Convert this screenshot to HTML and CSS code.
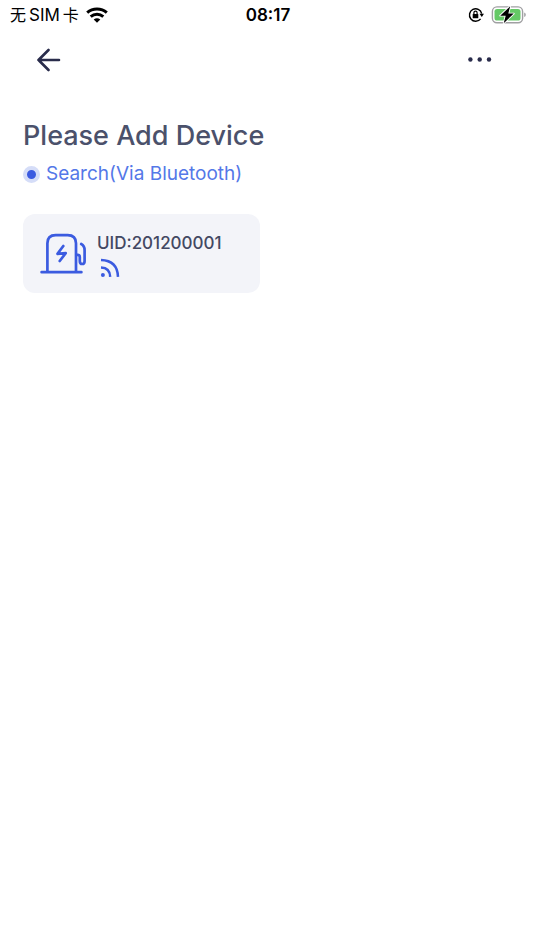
FILE: index.html
```html
<!DOCTYPE html>
<html lang="en">
<head>
<meta charset="utf-8">
<meta name="viewport" content="width=device-width, initial-scale=1">
<title>Add Device</title>
<link rel="stylesheet" href="styles.css">
</head>
<body>
<div class="status-bar">
  <div class="status-side">
    <span class="carrier">无<span class="carrier-latin">SIM</span>卡</span>
    <svg class="wifi" width="22" height="16" viewBox="0 0 22 16" aria-hidden="true">
      <g fill="none" stroke="#000" stroke-width="3">
        <path d="M1.2 5.600C6.700.8 15.300.8 20.800 5.600"/>
        <path d="M4.700 9.600C8.400 6.400 13.600 6.400 17.300 9.600"/>
      </g>
      <path d="M7.700 12.400Q11 9.900 14.300 12.400L11 15.700Z"/>
    </svg>
  </div>
  <time class="clock">08:17</time>
  <div class="status-side status-right">
    <svg width="16" height="16" viewBox="0 0 16 16" aria-hidden="true">
      <path d="M12.600 11.800A6.200 6.200 0 1 1 13.700 6.600" fill="none" stroke="#000" stroke-width="1.400"/>
      <path d="M11.500 6.700H16L13.800 10Z"/>
      <rect x="4.700" y="7" width="5.600" height="4.300" rx=".6"/>
      <path d="M5.900 7.200V5.700a1.600 1.600 0 0 1 3.200 0v1.500" fill="none" stroke="#000" stroke-width="1.200"/>
    </svg>
    <svg width="35" height="20" viewBox="0 0 35 20" aria-hidden="true">
      <rect x="1.400" y="1.900" width="30.200" height="15.800" rx="4.500" fill="#fff" stroke="#a0a0a2" stroke-width="1.400"/>
      <rect x="3.500" y="4" width="26" height="11.600" rx="2.600" fill="#65c966"/>
      <path d="M33.200 7.500v4.500q1.600-.5 1.600-2.250T33.200 7.500Z" fill="#a0a0a2"/>
      <path d="M19.200 1.200 9.200 10.700h5.500L12.700 18.200 22.800 8.600H17.300Z" fill="#000" stroke="#fff" stroke-width="1.800" paint-order="stroke" stroke-linejoin="round"/>
    </svg>
  </div>
</div>
<header class="nav-bar">
  <button class="nav-button" type="button" aria-label="Back">
    <svg width="24" height="24" viewBox="0 0 24 24" aria-hidden="true">
      <path d="M22 12H1.500M11.500 2 1.500 12 11.500 22" fill="none" stroke="#292c4b" stroke-width="2.600" stroke-linecap="round" stroke-linejoin="round"/>
    </svg>
  </button>
  <button class="nav-button" type="button" aria-label="More">
    <svg width="24" height="24" viewBox="0 0 24 24" aria-hidden="true">
      <g fill="#292c4b"><circle cx="2.400" cy="11.500" r="2.200"/><circle cx="11.700" cy="11.500" r="2.200"/><circle cx="21" cy="11.500" r="2.200"/></g>
    </svg>
  </button>
</header>
<main class="content">
  <h1 class="title">Please Add Device</h1>
  <p class="search"><span class="pulse"></span>Search(Via Bluetooth)</p>
  <div class="devices">
    <button class="device" type="button">
      <svg width="48" height="48" viewBox="0 0 48 48" aria-hidden="true">
        <g fill="none" stroke="#3b5be0" stroke-width="2.700" stroke-linecap="round" stroke-linejoin="round">
          <path d="M2.600 42.200H42.400M8.400 42V13.300q0-8.200 8.200-8.200h12q8.400 0 8.400 8.200V42"/>
          <path d="M24.300 16 18.500 23.800 26.700 23.200 20.700 31"/>
          <path d="M37.300 24.800h1.500q2 0 2 2.200v3.900q0 3.100 2.400 3.100t2.400-3.100V20.200q0-4.500-3.400-6.200"/>
        </g>
      </svg>
      <span class="device-info">
        <span class="uid">UID:201200001</span>
        <svg class="signal" width="20" height="20" viewBox="0 0 20 20" aria-hidden="true">
          <circle cx="2.900" cy="16.900" r="2" fill="#3b5be0"/>
          <path d="M1 9.400q9 .3 9.200 9.500M1 2Q17.500 2.500 18 18.900" fill="none" stroke="#3b5be0" stroke-width="2.500"/>
        </svg>
      </span>
    </button>
  </div>
</main>
</body>
</html>
```
FILE: styles.css
```css
* {
  box-sizing: border-box;
}

body {
  margin: 0;
  background: #fff;
  color: #000;
  font-family: Inter, "Noto Sans CJK SC", sans-serif;
}

svg {
  display: block;
}

button {
  border: 0;
  background: none;
  color: inherit;
  font: inherit;
}

.status-bar {
  display: grid;
  grid-template-columns: 1fr auto 1fr;
  align-items: center;
  height: 30px;
  padding: 0 8px 0 10px;
}

.status-side {
  display: flex;
  align-items: center;
  gap: 7px;
}

.status-right {
  justify-content: flex-end;
}

.carrier {
  display: flex;
  align-items: center;
  gap: 3px;
  font-size: 16px;
  line-height: 24px;
}

.carrier-latin {
  font-size: 17px;
}

.clock {
  font-size: 17px;
  font-weight: 600;
  line-height: 24px;
}

.nav-bar {
  display: flex;
  align-items: center;
  justify-content: space-between;
  height: 60px;
  padding: 0 34px 0 29px;
}

.nav-button {
  padding: 8px;
}

.content {
  padding: 28px 23px;
}

.title {
  margin: 0;
  color: #4b516b;
  font-size: 27px;
  font-weight: 500;
  line-height: 36px;
}

.search {
  display: flex;
  align-items: center;
  gap: 6px;
  margin: 8px 0 0;
  color: #5478e8;
  font-size: 19px;
  line-height: 24px;
}

.pulse {
  width: 17px;
  height: 17px;
  border: 4px solid #d5ddf8;
  border-radius: 50%;
  background: #3b5be0;
}

.devices {
  display: grid;
  grid-template-columns: 1fr 1fr;
  gap: 14px;
  margin-top: 28px;
}

.device {
  display: flex;
  align-items: center;
  gap: 10px;
  padding: 16px 16px 15px;
  border-radius: 12px;
  background: #f3f4f9;
  text-align: left;
}

.device-info {
  display: grid;
  gap: 3px;
}

.uid {
  color: #434863;
  font-size: 17px;
  font-weight: 500;
  line-height: 24px;
}

.signal {
  margin-left: 3px;
}
```
